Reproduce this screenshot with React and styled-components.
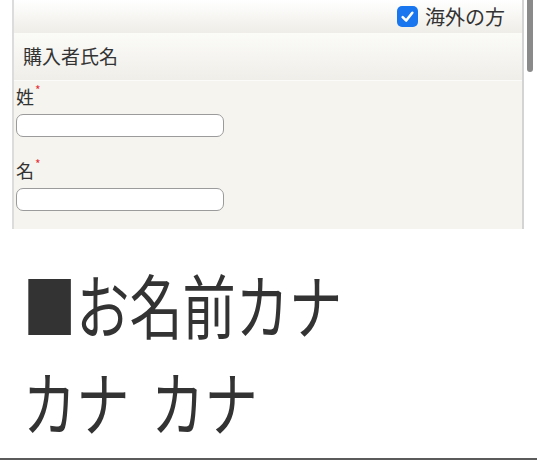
import styled, { createGlobalStyle } from 'styled-components';

const GlobalStyle = createGlobalStyle`
    body {
        margin: 0;
        background: #fff;
        font-family: "Noto Sans CJK JP", "Noto Sans", sans-serif;
        color: #333;
    }
`;

const StyledScreen = styled.div`
    box-sizing: border-box;
    height: 460px;
    border-bottom: 2px solid #5b5b5b;
    overflow: hidden;
`;

const StyledTop = styled.div`
    display: flex;
    padding-left: 12px;
`;

const StyledPanel = styled.section`
    box-sizing: border-box;
    width: 512px;
    height: 229px;
    border-left: 2px solid #dcdcdc;
    border-right: 2px solid #d4d4d4;
    background: #f5f4ef;
    display: flex;
    flex-direction: column;
`;

const StyledTopRow = styled.div`
    height: 33px;
    display: flex;
    justify-content: flex-end;
    align-items: center;
    gap: 7px;
    padding-right: 17px;
    background: linear-gradient(#ffffff, #efede7);
    font-size: 20px;
`;

const StyledCheck = styled.span`
    display: grid;
    place-items: center;
    width: 21px;
    height: 21px;
    border-radius: 5px;
    background: #1a76ee;
`;

const StyledHeader = styled.div`
    box-sizing: border-box;
    height: 48px;
    display: flex;
    align-items: center;
    padding: 0 0 2px 9px;
    background: linear-gradient(#fbfbf8, #f0eee9);
    border-bottom: 1px solid #fbfbf9;
    font-size: 19px;
`;

const StyledForm = styled.div`
    display: flex;
    flex-direction: column;
    padding: 3px 2px 0;
`;

const StyledLabel = styled.label`
    display: block;
    height: 24px;
    font-size: 18px;
    line-height: 24px;
    margin-top: ${({ $first }) => ($first ? '0' : '21px')};
`;

const StyledReq = styled.span`
    display: inline-block;
    vertical-align: top;
    color: #e8313a;
    font-size: 12px;
    line-height: 12px;
    margin-left: 1px;
`;

const StyledInput = styled.input`
    box-sizing: border-box;
    width: 208px;
    height: 23px;
    margin-top: 6px;
    border: 1.5px solid #9b9b9b;
    border-radius: 7px;
    background: #fff;
    padding: 0 6px;
    font: inherit;
`;

const StyledTrack = styled.div`
    width: 13px;
    background: #fff;
`;

const StyledThumb = styled.div`
    width: 6px;
    height: 72px;
    margin-left: 3px;
    border-radius: 0 0 3px 3px;
    background: #8a8a8a;
`;

const StyledBottom = styled.div`
    padding: 40px 0 0 23px;
    display: flex;
    flex-direction: column;
    gap: 27px;
`;

const StyledBig = styled.div`
    font-size: 70px;
    line-height: 70px;
    color: #333;
    white-space: nowrap;
    word-spacing: 13px;
    transform: scaleX(0.76);
    transform-origin: left center;
`;

function Field({ label, first }) {
    return (
        <>
            <StyledLabel $first={first}>
                {label}
                <StyledReq>*</StyledReq>
            </StyledLabel>
            <StyledInput type="text" />
        </>
    );
}

export default function App() {
    return (
        <>
            <GlobalStyle />
            <StyledScreen>
                <StyledTop>
                    <StyledPanel>
                        <StyledTopRow>
                            <StyledCheck>
                                <svg width="15" height="15" viewBox="0 0 14 14">
                                    <polyline
                                        points="2.5,7.5 5.8,10.8 11.5,3.5"
                                        fill="none"
                                        stroke="#fff"
                                        strokeWidth="2.4"
                                        strokeLinecap="round"
                                        strokeLinejoin="round"
                                    />
                                </svg>
                            </StyledCheck>
                            <span>海外の方</span>
                        </StyledTopRow>
                        <StyledHeader>購入者氏名</StyledHeader>
                        <StyledForm>
                            <Field label="姓" first />
                            <Field label="名" />
                        </StyledForm>
                    </StyledPanel>
                    <StyledTrack>
                        <StyledThumb />
                    </StyledTrack>
                </StyledTop>
                <StyledBottom>
                    <StyledBig>■お名前カナ</StyledBig>
                    <StyledBig>カナ カナ</StyledBig>
                </StyledBottom>
            </StyledScreen>
        </>
    );
}
